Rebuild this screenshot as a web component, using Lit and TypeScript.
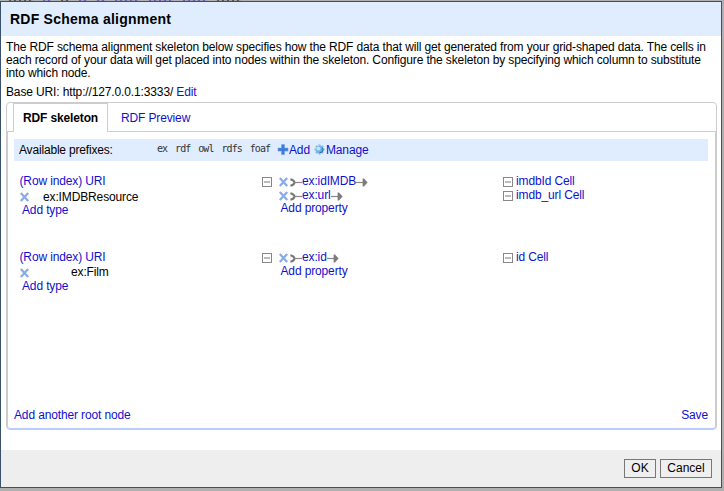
import { LitElement, html, css, svg } from "lit";
import { customElement } from "lit/decorators.js";

interface Property { name: string; target: string }
interface RootNode { type: string; cls: string; props: Property[] }

const nodes: RootNode[] = [
  {
    type: "ex:IMDBResource",
    cls: "resource",
    props: [
      { name: "ex:idIMDB", target: "imdbId Cell" },
      { name: "ex:url", target: "imdb_url Cell" },
    ],
  },
  { type: "ex:Film", cls: "film", props: [{ name: "ex:id", target: "id Cell" }] },
];

const cross = html`<svg class="cross" width="10" height="10" viewBox="0 0 10 10">
  <path d="M.8 1L8.2 9M8.2 1L.8 9" stroke="#8aabea" stroke-width="2.3" fill="none" />
</svg>`;

const toggle = html`<svg class="toggle" width="10" height="10" viewBox="0 0 10 10">
  <rect x=".5" y=".5" width="9" height="9" fill="#fff" stroke="#888" />
  <path d="M2 5H8" stroke="#bbb" stroke-width="2" />
</svg>`;

const tail = html`<svg class="tail" width="12" height="9" viewBox="0 0 12 9">
  <path d="M.4 1.2C2.4 1.6 4.2 3 4.6 4.5C4.2 6 2.4 7.4 .4 7.8" stroke="#777" stroke-width="2.1" fill="none" />
  <path d="M4 4.5H12" stroke="#888" stroke-width="1.2" />
</svg>`;

const head = html`<svg class="head" width="12" height="9" viewBox="0 0 12 9">
  <path d="M0 4.5H8" stroke="#888" stroke-width="1.2" />
  <path d="M6.6 .4L8 .4L11.6 4.5L8 8.6L6.6 8.6Z" fill="#7c7c7c" />
</svg>`;

const plus = html`<svg class="plus" width="12" height="12" viewBox="0 0 12 12">
  <path d="M4.5 .6H7.5V4.1H11V7.1H7.5V10.6H4.5V7.1H1V4.1H4.5Z" fill="#3d7bdb" stroke="#6d9fe8" stroke-width=".6" />
</svg>`;

const gear = html`<svg class="gear" width="11" height="11" viewBox="0 0 11 11">
  ${[0, 45, 90, 135].map(
    (a) => svg`<rect x="4.4" y=".4" width="2.2" height="10.2" fill="#8fc0e6" transform="rotate(${a} 5.5 5.5)" />`
  )}
  <circle cx="5.5" cy="5.5" r="3.7" fill="#6db0e2" />
  <circle cx="4.4" cy="4.6" r="2.1" fill="#c3e2f6" />
  <path d="M8.2 3.6A3 3 0 0 1 5.6 8.6" stroke="#2b78bd" stroke-width="1.3" fill="none" />
</svg>`;

@customElement("app-root")
export class AppRoot extends LitElement {
  static styles = css`
    :host {
      display: block;
      box-sizing: border-box;
      height: 491px;
      padding: 0 2px 3px 0;
      overflow: hidden;
      background: #b0b0b0;
      color: #000;
      font: 12px/13px "Liberation Sans", Arial, sans-serif;
      letter-spacing: -0.135px;
    }
    * { box-sizing: border-box; }
    svg { display: block; flex: none; }
    a { color: #11c; white-space: nowrap; }
    .behind { height: 1px; display: flex; gap: 10px; padding-left: 9px; }
    .behind i { width: 24px; background: repeating-linear-gradient(90deg, #555 0 2px, #a4a4a4 2px 5px); }
    .behind i.link { background: repeating-linear-gradient(90deg, #6c62b4 0 2px, #a4a4b0 2px 5px); }
    .behind i.short { width: 8px; }
    .dialog {
      height: 487px;
      border: 1px solid #38526b;
      background: #fff;
      display: flex;
      flex-direction: column;
    }
    .header {
      height: 34px;
      padding: 9px 9px 0;
      background: #e0edfe;
      font-size: 14px;
      line-height: 17px;
      font-weight: bold;
      letter-spacing: 0.24px;
    }
    .intro { padding: 5px 0 0 5px; white-space: nowrap; }
    .base { padding: 6px 0 0 5px; height: 22px; }
    .panel {
      height: 328px;
      margin: 0 4px 0 5px;
      border: 1px solid #ccc;
      border-radius: 4px;
      display: flex;
      flex-direction: column;
    }
    .tabs { height: 29px; display: flex; padding-left: 6px; }
    .spacer { width: 6px; margin-left: -6px; border-bottom: 1px solid #bbccff; }
    .tab { height: 29px; padding: 9px 0 0; border-bottom: 1px solid #bbccff; flex: 1; }
    .tab.on {
      flex: none;
      width: 95px;
      padding: 8px 0 0 9px;
      font-weight: bold;
      border: 1px solid #bbccff;
      border-bottom: 0;
    }
    .tab.off { padding-left: 13px; }
    .body {
      flex: 1;
      border: 1px solid #bbccff;
      border-top: 0;
      border-radius: 0 0 3px 3px;
      padding: 7px 7px 0 6px;
      display: flex;
      flex-direction: column;
    }
    .prefixes {
      height: 22px;
      flex: none;
      background: #e0edfe;
      padding-left: 5px;
      display: flex;
      align-items: center;
    }
    .label { width: 138px; letter-spacing: -0.18px; }
    .codes {
      display: flex;
      gap: 7.8px;
      width: 119.5px;
      font: 10px/12px "DejaVu Sans Mono", monospace;
      letter-spacing: -0.9px;
      color: #333;
      margin-top: -2px;
    }
    .plus { margin: 0 0.5px 1px 0; }
    .gear { margin: 0 1px 1px 4px; }
    .nodes { padding: 14px 0 0 5px; flex: 1; }
    .node { display: grid; grid-template-columns: 243px 241px 1fr; height: 76px; }
    .uri { padding-left: 0.5px; }
    .type { display: flex; align-items: center; height: 16px; padding-top: 1px; }
    .type .cross { margin-left: 0.5px; }
    .resource .type { gap: 13.5px; }
    .resource .type span { margin-top: 1px; }
    .film .type { gap: 41.5px; }
    .add { display: block; padding-left: 3px; }
    .links { display: flex; }
    .links .toggle { margin: 2px 6.5px 0 0; }
    .line { display: flex; align-items: center; height: 14px; }
    .line a { margin-bottom: 1px; }
    .line .cross { margin-bottom: 1px; }
    .list .tail { margin-left: 1.5px; }
    .list .add { margin-top: -1px; padding-left: 2px; }
    .film .list .add { margin-top: 0; }
    .target .toggle { margin-right: 3px; }
    .actions { display: flex; justify-content: space-between; height: 19px; }
    .footer {
      margin-top: 20px;
      flex: 1;
      background: #eee;
      display: flex;
      justify-content: flex-end;
      gap: 4px;
      padding: 9px 9px 0 0;
    }
    button {
      height: 19px;
      padding: 0;
      border: 1px solid #777;
      background: #efefef;
      color: #000;
      font: 12px/15px "Liberation Sans", Arial, sans-serif;
    }
    .ok { width: 32px; }
    .cancel { width: 52px; }
  `;

  render() {
    return html`<div class="behind">
        <i></i><i class="link short"></i><i class="short"></i><i class="link short"></i>
        <i class="link short"></i><i class="link"></i><i class="link"></i><i class="link"></i><i></i>
      </div>
      <div class="dialog">
      <div class="header">RDF Schema alignment</div>
      <div class="intro">
        The RDF schema alignment skeleton below specifies how the RDF data that will get generated from your grid-shaped data. The cells in<br />
        each record of your data will get placed into nodes within the skeleton. Configure the skeleton by specifying which column to substitute<br />
        into which node.
      </div>
      <div class="base">Base URI: http://127.0.0.1:3333/ <a>Edit</a></div>
      <div class="panel">
        <div class="tabs">
          <div class="spacer"></div>
          <div class="tab on">RDF skeleton</div>
          <div class="tab off"><a>RDF Preview</a></div>
        </div>
        <div class="body">
          <div class="prefixes">
            <span class="label">Available prefixes:</span>
            <span class="codes">${["ex", "rdf", "owl", "rdfs", "foaf"].map((p) => html`<span>${p}</span>`)}</span>
            ${plus}<a>Add</a>${gear}<a>Manage</a>
          </div>
          <div class="nodes">
            ${nodes.map(
              (n) => html`<div class="node ${n.cls}">
                <div>
                  <a class="uri">(Row index) URI</a>
                  <div class="type">${cross}<span>${n.type}</span></div>
                  <a class="add">Add type</a>
                </div>
                <div class="links">
                  ${toggle}
                  <div class="list">
                    ${n.props.map((p) => html`<div class="line">${cross}${tail}<a>${p.name}</a>${head}</div>`)}
                    <a class="add">Add property</a>
                  </div>
                </div>
                <div class="target">
                  ${n.props.map((p) => html`<div class="line">${toggle}<a>${p.target}</a></div>`)}
                </div>
              </div>`
            )}
          </div>
          <div class="actions"><a>Add another root node</a><a>Save</a></div>
        </div>
      </div>
      <div class="footer">
        <button class="ok">OK</button>
        <button class="cancel">Cancel</button>
      </div>
    </div>`;
  }
}
